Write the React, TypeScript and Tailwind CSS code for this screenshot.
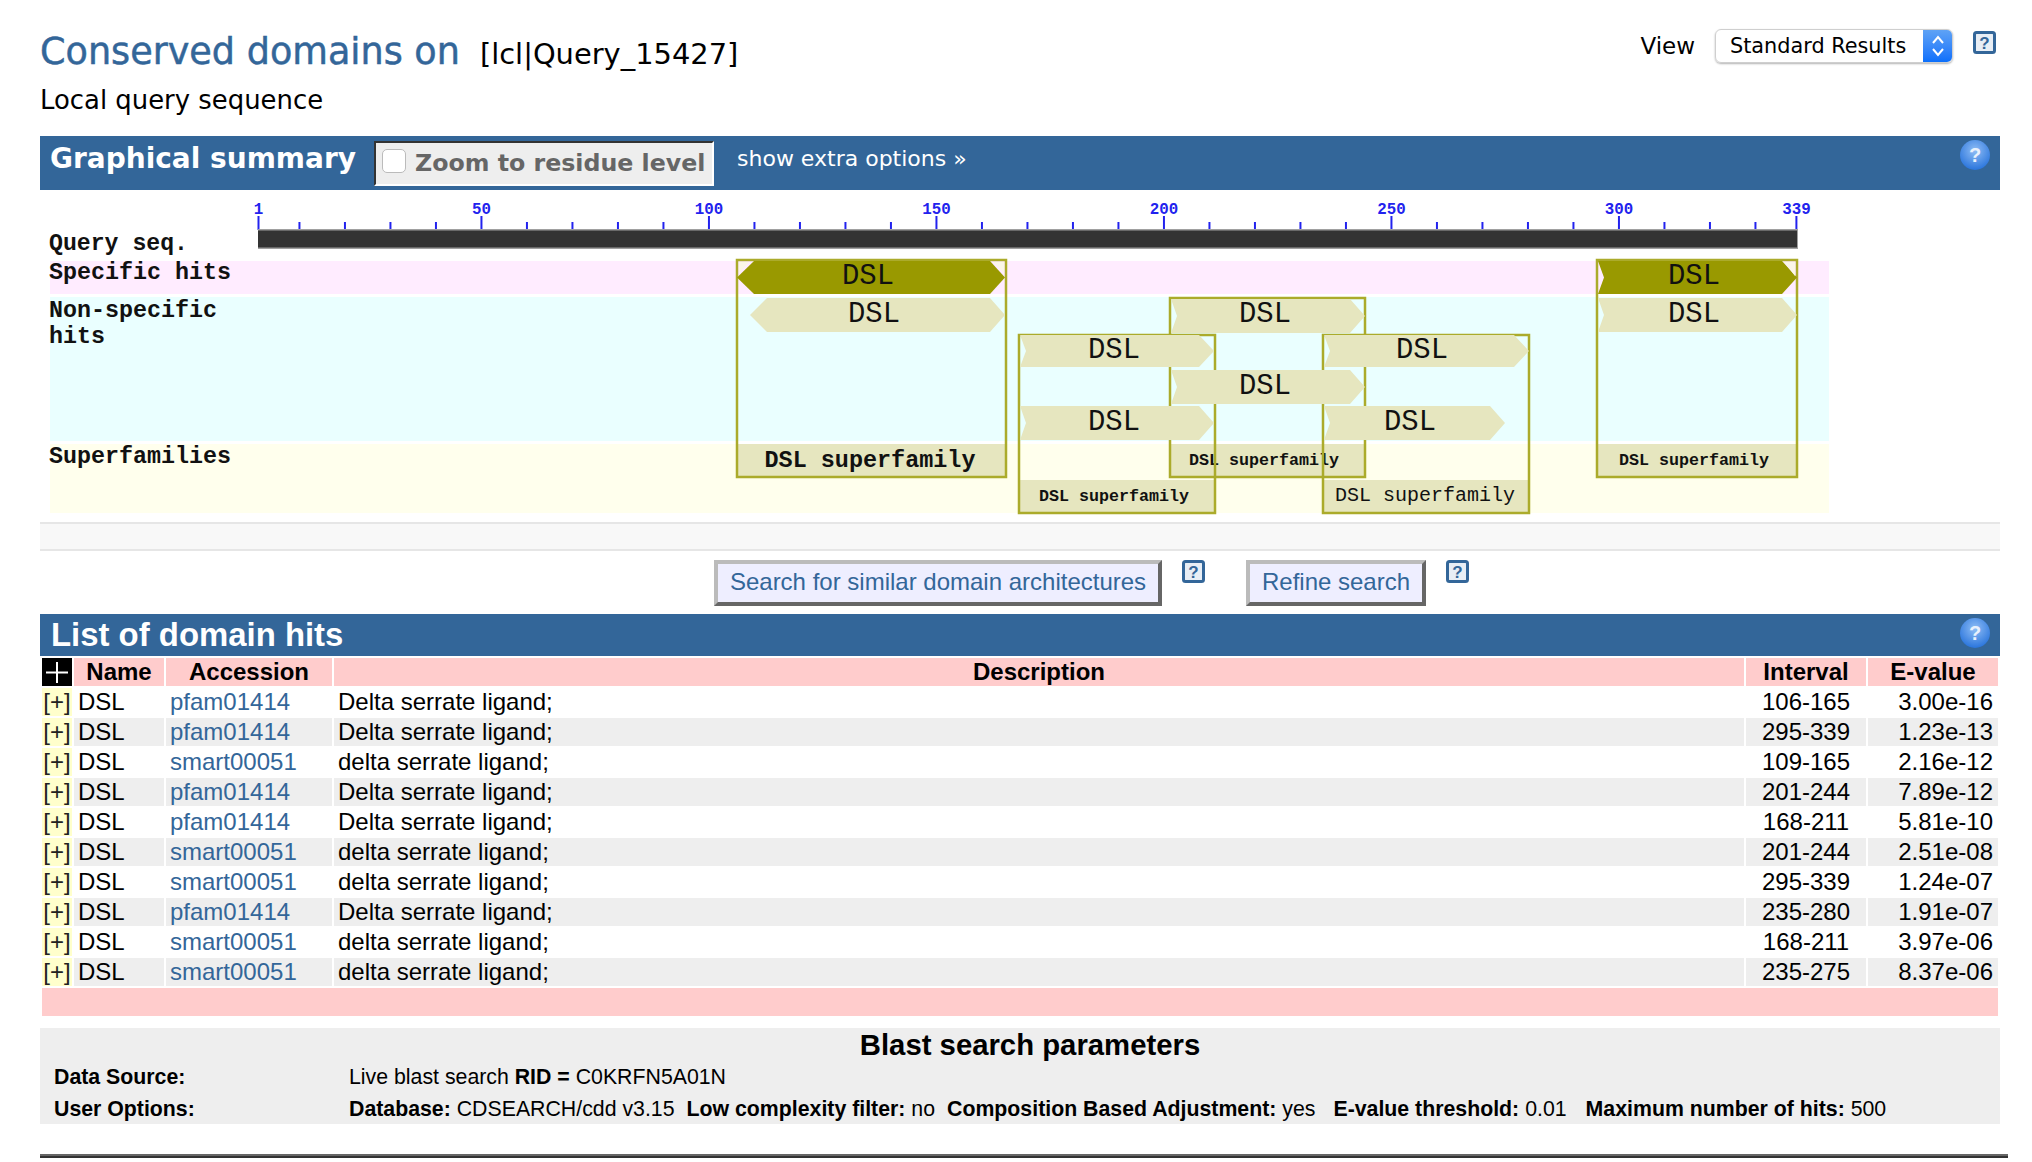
import React from 'react';

const ARIAL = "font-['Liberation_Sans',Arial,sans-serif]";
const LUCIDA = "font-['DejaVu_Sans',sans-serif]";

const hits = [
  ['pfam01414', 'Delta serrate ligand;', '106-165', '3.00e-16'],
  ['pfam01414', 'Delta serrate ligand;', '295-339', '1.23e-13'],
  ['smart00051', 'delta serrate ligand;', '109-165', '2.16e-12'],
  ['pfam01414', 'Delta serrate ligand;', '201-244', '7.89e-12'],
  ['pfam01414', 'Delta serrate ligand;', '168-211', '5.81e-10'],
  ['smart00051', 'delta serrate ligand;', '201-244', '2.51e-08'],
  ['smart00051', 'delta serrate ligand;', '295-339', '1.24e-07'],
  ['pfam01414', 'Delta serrate ligand;', '235-280', '1.91e-07'],
  ['smart00051', 'delta serrate ligand;', '168-211', '3.97e-06'],
  ['smart00051', 'delta serrate ligand;', '235-275', '8.37e-06'],
];

function SquareHelp() {
  return (
    <svg width="23" height="23" viewBox="0 0 23 23">
      <rect x="1.5" y="1.5" width="20" height="20" rx="2" fill="#e8eef5" stroke="#336699" strokeWidth="3" />
      <text x="11.5" y="18" textAnchor="middle" fontSize="17" fontWeight="700" fill="#336699" className={ARIAL}>
        ?
      </text>
    </svg>
  );
}

function RoundHelp() {
  return (
    <svg width="30" height="30" viewBox="0 0 30 30">
      <defs>
        <radialGradient id="helpBlue" cx="50%" cy="35%" r="65%">
          <stop offset="0%" stopColor="#8fbdf5" />
          <stop offset="100%" stopColor="#2a75dc" />
        </radialGradient>
      </defs>
      <circle cx="15" cy="15" r="15" fill="url(#helpBlue)" />
      <text x="15" y="22" textAnchor="middle" fontSize="20" fontWeight="700" fill="#e8f1fc" className={ARIAL}>
        ?
      </text>
    </svg>
  );
}

const OLIVE = '#999900';
const PALE = '#e6e6bf';
const LINE = '#abab2b';

const xAt = (n: number) => 258.5 + (n - 1) * 4.55;

function MonoText(props: {
  x: number;
  y: number;
  size: number;
  width: number;
  bold?: boolean;
  anchor?: 'start' | 'middle';
  fill?: string;
  children: string;
}) {
  return (
    <text
      x={props.x}
      y={props.y}
      fontSize={props.size}
      fontWeight={props.bold ? 700 : 400}
      textAnchor={props.anchor ?? 'start'}
      textLength={props.width}
      lengthAdjust="spacingAndGlyphs"
      fill={props.fill ?? '#111'}
      className="font-['Liberation_Mono',monospace]"
    >
      {props.children}
    </text>
  );
}

// arrow shaped hit: notch = cut on the left, otherwise a pointed left end
function Hit(props: { x0: number; x1: number; y: number; notch?: boolean; fill?: string; h?: number; inset?: number }) {
  const { x0, x1, y, notch, fill = PALE, h = 34, inset = 15 } = props;
  const mid = y + h / 2;
  const pts = notch
    ? `${x0 + 1},${y} ${x1 - inset},${y} ${x1},${mid} ${x1 - inset},${y + h} ${x0 + 1},${y + h} ${x0 + 7},${mid}`
    : `${x0 + 17},${y} ${x1 - inset},${y} ${x1},${mid} ${x1 - inset},${y + h} ${x0 + 17},${y + h} ${x0},${mid}`;
  return <polygon points={pts} fill={fill} />;
}

function DomainGraphic() {
  const majors = [1, 50, 100, 150, 200, 250, 300, 339];
  const minors: number[] = [];
  for (let n = 10; n < 339; n += 10) {
    if (n % 50 !== 0) minors.push(n);
  }

  const boxes = [
    [737, 260, 1006, 477],
    [1170, 298, 1365, 477],
    [1019, 335, 1215, 513],
    [1323, 335, 1529, 513],
    [1597, 260, 1797, 477],
  ];

  return (
    <svg width="1960" height="332" viewBox="40 190 1960 332" className="block">
      {/* ruler */}
      {majors.map((n) => (
        <g key={n}>
          <line x1={xAt(n)} x2={xAt(n)} y1="216" y2="230" stroke="#2222ee" strokeWidth="2" />
          <MonoText
            x={xAt(n)}
            y={214}
            size={17}
            bold
            anchor="middle"
            width={String(n).length * 9.5}
            fill="#2222ee"
          >
            {String(n)}
          </MonoText>
        </g>
      ))}
      {minors.map((n) => (
        <line key={n} x1={xAt(n)} x2={xAt(n)} y1="222" y2="230" stroke="#2222ee" strokeWidth="2" />
      ))}
      <rect x="258" y="229" width="1540" height="20" fill="#a0a0a0" />
      <rect x="258" y="230.5" width="1539" height="17" fill="#333333" />

      {/* track backgrounds */}
      <rect x="50" y="261" width="1779" height="33" fill="#ffecff" />
      <rect x="50" y="297" width="1779" height="144" fill="#eaffff" />
      <rect x="50" y="444" width="1779" height="69" fill="#ffffed" />

      <MonoText x={49} y={250} size={23} bold width={139}>Query seq.</MonoText>
      <MonoText x={49} y={279} size={23} bold width={182}>Specific hits</MonoText>
      <MonoText x={49} y={317} size={23} bold width={168}>Non-specific</MonoText>
      <MonoText x={49} y={343} size={23} bold width={56}>hits</MonoText>
      <MonoText x={49} y={463} size={23} bold width={182}>Superfamilies</MonoText>

      {/* superfamily bars */}
      <rect x="737" y="444" width="269" height="33" fill={PALE} />
      <rect x="1170" y="444" width="195" height="33" fill={PALE} />
      <rect x="1019" y="480" width="196" height="33" fill={PALE} />
      <rect x="1323" y="480" width="206" height="33" fill={PALE} />
      <rect x="1597" y="444" width="200" height="33" fill={PALE} />
      <MonoText x={870} y={467} size={23} bold anchor="middle" width={211}>DSL superfamily</MonoText>
      <MonoText x={1189} y={465} size={17} bold width={150}>DSL superfamily</MonoText>
      <MonoText x={1039} y={501} size={17} bold width={150}>DSL superfamily</MonoText>
      <MonoText x={1335} y={501} size={20} width={180}>DSL superfamily</MonoText>
      <MonoText x={1619} y={465} size={17} bold width={150}>DSL superfamily</MonoText>

      {boxes.map(([x0, y0, x1, y1]) => (
        <rect
          key={`${x0}-${y0}`}
          x={x0}
          y={y0}
          width={x1 - x0}
          height={y1 - y0}
          fill="none"
          stroke={LINE}
          strokeWidth="2.5"
        />
      ))}

      {/* hits */}
      <Hit x0={737} x1={1005} y={261} fill={OLIVE} inset={15} h={33} />
      <polygon points="739,262 749,262 739,273" fill="#fbf6e8" />
      <polygon points="1004,262 993,262 1004,273" fill="#fbf6e8" />
      <Hit x0={750} x1={1005} y={298} />
      <Hit x0={1597} x1={1797} y={261} notch fill={OLIVE} h={33} />
      <polygon points="1795,262 1784,262 1795,276" fill="#fbf6e8" />
      <Hit x0={1597} x1={1797} y={298} notch />
      <Hit x0={1170} x1={1365} y={299} notch />
      <Hit x0={1019} x1={1214} y={335} notch h={32} />
      <Hit x0={1323} x1={1529} y={335} notch h={32} />
      <Hit x0={1170} x1={1365} y={370} notch />
      <Hit x0={1019} x1={1214} y={406} notch />
      <Hit x0={1323} x1={1505} y={406} notch />

      {[
        [868, 284],
        [874, 322],
        [1265, 322],
        [1114, 358],
        [1422, 358],
        [1265, 394],
        [1114, 430],
        [1410, 430],
        [1694, 284],
        [1694, 322],
      ].map(([x, y]) => (
        <MonoText key={`${x}-${y}`} x={x} y={y} size={29} anchor="middle" width={52}>
          DSL
        </MonoText>
      ))}
    </svg>
  );
}

function SectionBar(props: { children: React.ReactNode; className: string }) {
  return <div className={`flex w-[1960px] bg-[#336699] text-white ${props.className}`}>{props.children}</div>;
}

export default function App() {
  return (
    <div className={`pl-10 pb-1 bg-white text-black ${ARIAL}`}>
      {/* page header */}
      <div className="flex w-[1960px] h-[136px] justify-between">
        <div className={LUCIDA}>
          <div className="flex items-baseline pt-[27px]">
            <h1 className="text-[#336699] text-[36.6px] leading-[50px] [-webkit-text-stroke:0.5px_#336699]">Conserved domains on</h1>
            <span className="ml-[20px] text-[28.9px]">[lcl|Query_15427]</span>
          </div>
          <p className="mt-[6px] text-[25.9px] leading-[34px]">Local query sequence</p>
        </div>
        <div className="flex items-start pt-[29px]">
          <span className={`${LUCIDA} mr-[20px] text-[23px] leading-[34px]`}>View</span>
          <div className="flex w-[238px] h-[34px] rounded-[6px] border border-[#cfcfcf] shadow-[0_1px_2px_rgba(0,0,0,0.3)] overflow-hidden">
            <span className={`${LUCIDA} flex-1 pl-[14px] text-[20.8px] leading-[32px]`}>Standard Results</span>
            <span className="flex w-[29px] items-center justify-center bg-gradient-to-b from-[#5ea2f5] to-[#0a6ffb]">
              <svg width="14" height="24" viewBox="0 0 14 24" fill="none" stroke="#fff" strokeWidth="2">
                <path d="M2 9 L7 3 L12 9" />
                <path d="M2 15 L7 21 L12 15" />
              </svg>
            </span>
          </div>
          <span className="ml-[20px] mr-1 mt-[2px] block">
            <SquareHelp />
          </span>
        </div>
      </div>

      {/* graphical summary */}
      <SectionBar className="h-[54px] items-start relative">
        <span className={`${LUCIDA} ml-[10px] mt-[6px] text-[28px] leading-[34px] font-bold`}>Graphical summary</span>
        <label className={`${LUCIDA} ml-[18px] mt-[5px] flex h-[45px] w-[340px] items-center border-2 border-t-[#333] border-l-[#333] border-b-white border-r-white bg-[#eeeeee] pl-[6px] text-[#666] text-[23.7px] font-bold`}>
          <input type="checkbox" className="mb-[5px] h-[24px] w-[24px] appearance-none rounded-[5px] border border-[#bbb] bg-white" />
          <span className="ml-[9px] whitespace-nowrap">Zoom to residue level</span>
        </label>
        <span className={`${LUCIDA} ml-[23px] mt-[8px] text-[22px] leading-[30px]`}>show extra options »</span>
        <span className="absolute right-[10px] top-[4px] block">
          <RoundHelp />
        </span>
      </SectionBar>

      <DomainGraphic />

      <div className="h-[29px] w-[1960px] border-y-2 border-[#e6e6e6] bg-[#f8f8f8]" />

      {/* actions */}
      <div className="flex h-[63px] w-[1960px] items-start pl-[674px] pt-[9px]">
        <button type="button" className="h-[46px] w-[448px] border-4 border-t-[#bbb] border-l-[#bbb] border-b-[#666] border-r-[#666] bg-[#eeeeff] pb-[2px] text-[#336699] text-[24px]">
          Search for similar domain architectures
        </button>
        <span className="ml-[20px] block">
          <SquareHelp />
        </span>
        <button type="button" className="ml-[41px] h-[46px] w-[180px] border-4 border-t-[#bbb] border-l-[#bbb] border-b-[#666] border-r-[#666] bg-[#eeeeff] pb-[2px] text-[#336699] text-[24px]">
          Refine search
        </button>
        <span className="ml-[20px] block">
          <SquareHelp />
        </span>
      </div>

      {/* hit list */}
      <SectionBar className="h-[42px] items-center relative">
        <span className="ml-[11px] text-[32.9px] font-bold leading-[42px]">List of domain hits</span>
        <span className="absolute right-[10px] top-[4px] block">
          <RoundHelp />
        </span>
      </SectionBar>

      <table className="w-[1960px] table-fixed border-separate border-spacing-[2px] text-[24px]">
        <colgroup>
          <col className="w-[30px]" />
          <col className="w-[90px]" />
          <col className="w-[166px]" />
          <col />
          <col className="w-[120px]" />
          <col className="w-[130px]" />
        </colgroup>
        <thead>
          <tr className="h-[28px]">
            <th className="bg-black p-0">
              <svg width="30" height="28" viewBox="0 0 30 28" className="block">
                <path d="M15 4 V25 M4 14.5 H26" stroke="#fff" strokeWidth="2" />
              </svg>
            </th>
            {['Name', 'Accession', 'Description', 'Interval', 'E-value'].map((h) => (
              <th key={h} className="bg-[#ffcccc] p-0 font-bold leading-[28px]">
                {h}
              </th>
            ))}
          </tr>
        </thead>
        <tbody>
          {hits.map(([acc, desc, interval, evalue], i) => {
            const bg = i % 2 === 1 ? 'bg-[#eeeeee]' : 'bg-white';
            return (
              <tr key={i} className="h-[28px] leading-[28px]">
                <td className="bg-[#ffffcc] p-0 text-center text-[#222]">[+]</td>
                <td className={`${bg} p-0 pl-[4px]`}>DSL</td>
                <td className={`${bg} p-0 pl-[4px] text-[#336699]`}>{acc}</td>
                <td className={`${bg} p-0 pl-[4px]`}>{desc}</td>
                <td className={`${bg} p-0 text-center`}>{interval}</td>
                <td className={`${bg} p-0 pr-[5px] text-right`}>{evalue}</td>
              </tr>
            );
          })}
          <tr className="h-[28px]">
            <td colSpan={6} className="bg-[#ffcccc] p-0" />
          </tr>
        </tbody>
      </table>

      {/* search parameters */}
      <div className="mt-[10px] h-[96px] w-[1960px] bg-[#eeeeee] text-[21.3px]">
        <h2 className="pl-[20px] text-center text-[29.3px] font-bold leading-[33px]">Blast search parameters</h2>
        <div className="flex leading-[32px]">
          <span className="w-[309px] pl-[14px] font-bold">Data Source:</span>
          <span>
            Live blast search <b>RID =</b> C0KRFN5A01N
          </span>
        </div>
        <div className="flex leading-[32px] whitespace-nowrap">
          <span className="w-[309px] pl-[14px] font-bold">User Options:</span>
          <span>
            <b>Database:</b> CDSEARCH/cdd v3.15
          </span>
          <span className="ml-[12px]">
            <b>Low complexity filter:</b> no
          </span>
          <span className="ml-[12px]">
            <b>Composition Based Adjustment:</b> yes
          </span>
          <span className="ml-[18px]">
            <b>E-value threshold:</b> 0.01
          </span>
          <span className="ml-[19px]">
            <b>Maximum number of hits:</b> 500
          </span>
        </div>
      </div>

      <div className="mt-[30px] h-[4px] w-[1968px] border-t-2 border-t-[#666] bg-[#333]" />
    </div>
  );
}
